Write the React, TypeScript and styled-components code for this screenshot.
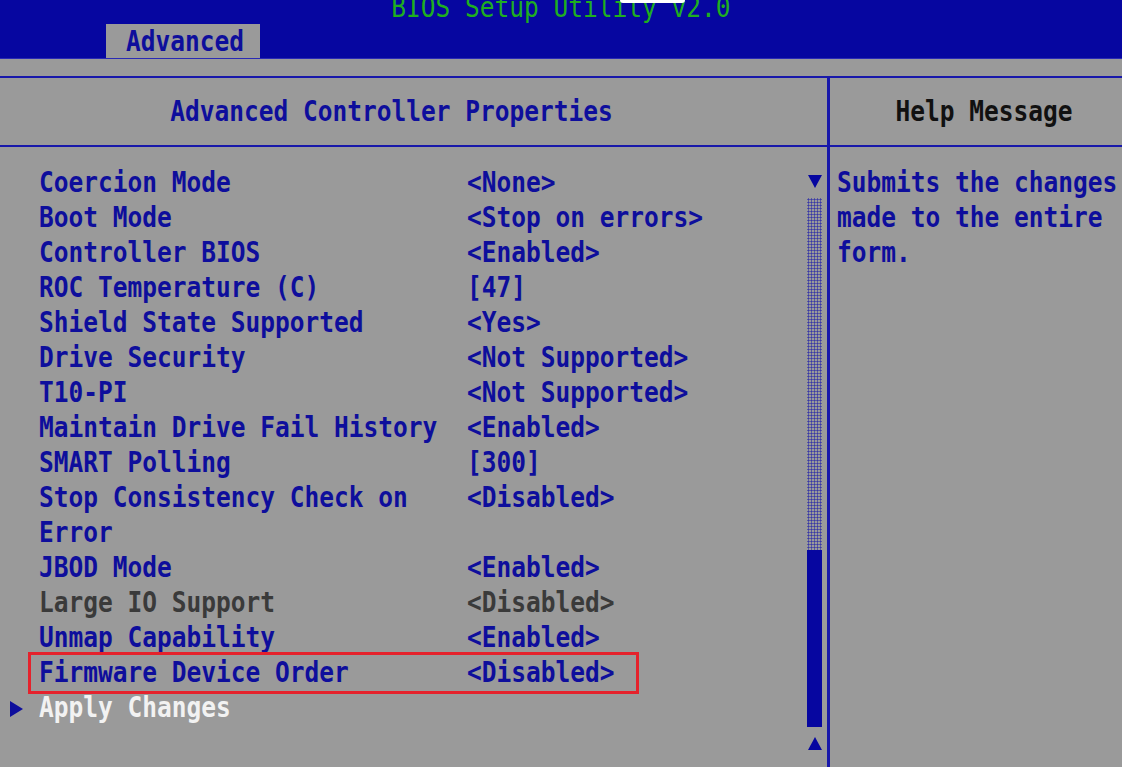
import React from "react";
import styled, { createGlobalStyle } from "styled-components";

const colors = {
  gray: "#9a9a9a",
  navy: "#0606a0",
  line: "#1818aa",
  text: "#0e0e9c",
  dim: "#3a3a3a",
  white: "#f2f2f2",
  green: "#1fae1f",
  red: "#e5222c",
};

const GlobalStyle = createGlobalStyle`
  html, body {
    margin: 0;
    padding: 0;
    background: ${colors.gray};
    overflow: hidden;
  }
  * {
    box-sizing: border-box;
  }
`;

type Tone = "normal" | "dim" | "active";

interface Setting {
  label: string;
  value?: string;
  tone?: Tone;
  highlighted?: boolean;
  pointer?: boolean;
}

const settings: Setting[] = [
  { label: "Coercion Mode", value: "<None>" },
  { label: "Boot Mode", value: "<Stop on errors>" },
  { label: "Controller BIOS", value: "<Enabled>" },
  { label: "ROC Temperature (C)", value: "[47]" },
  { label: "Shield State Supported", value: "<Yes>" },
  { label: "Drive Security", value: "<Not Supported>" },
  { label: "T10-PI", value: "<Not Supported>" },
  { label: "Maintain Drive Fail History", value: "<Enabled>" },
  { label: "SMART Polling", value: "[300]" },
  { label: "Stop Consistency Check on Error", value: "<Disabled>" },
  { label: "JBOD Mode", value: "<Enabled>" },
  { label: "Large IO Support", value: "<Disabled>", tone: "dim" },
  { label: "Unmap Capability", value: "<Enabled>" },
  { label: "Firmware Device Order", value: "<Disabled>", highlighted: true },
  { label: "Apply Changes", tone: "active", pointer: true },
];

// each word is its own stretched box so long labels still wrap line by line
const Words: React.FC<{ text: string }> = ({ text }) => (
  <>
    {text.split(" ").map((w, i) => (
      <React.Fragment key={i}>
        {i > 0 && " "}
        <Text>{w}</Text>
      </React.Fragment>
    ))}
  </>
);

const App: React.FC = () => {
  return (
    <>
      <GlobalStyle />
      <Screen>
        <TopBar>
          <Notch />
          <Title>BIOS Setup Utility v2.0</Title>
          <TabRow>
            <Tab>
              <Text>Advanced</Text>
            </Tab>
          </TabRow>
        </TopBar>
        <Frame>
          <MainPanel>
            <PanelHeader $padRight={44}>
              <Text>Advanced Controller Properties</Text>
            </PanelHeader>
            <MainBody>
              <List>
                {settings.map((s) => (
                  <Row key={s.label} $highlighted={s.highlighted}>
                    <Marker>{s.pointer && <Pointer />}</Marker>
                    <Cell $tone={s.tone || "normal"}>
                      <Words text={s.label} />
                    </Cell>
                    <Cell $tone={s.tone || "normal"}>
                      {s.value && <Words text={s.value} />}
                    </Cell>
                  </Row>
                ))}
              </List>
              <Scrollbar>
                <ArrowDown />
                <Track />
                <Thumb />
                <ArrowUp />
              </Scrollbar>
            </MainBody>
          </MainPanel>
          <HelpPanel>
            <PanelHeader $dark $padLeft={16}>
              <Text>Help Message</Text>
            </PanelHeader>
            <HelpBody>
              <Text>Submits the changes</Text>
              <Text>made to the entire</Text>
              <Text>form.</Text>
            </HelpBody>
          </HelpPanel>
        </Frame>
      </Screen>
    </>
  );
};

export default App;

const Screen = styled.div`
  width: 1122px;
  height: 767px;
  display: flex;
  flex-direction: column;
  background: ${colors.gray};
  font-family: "DejaVu Sans Mono", "Liberation Mono", monospace;
  font-weight: bold;
  font-size: 24.5px;
  color: ${colors.text};
  overflow: hidden;
`;

const Text = styled.span`
  display: inline-block;
  transform: scaleY(1.16);
  white-space: pre;
`;

const TopBar = styled.div`
  position: relative;
  height: 59px;
  background: ${colors.navy};
  border-bottom: 1px solid #2a2ab4;
  display: flex;
  flex-direction: column;
`;

const Notch = styled.div`
  position: absolute;
  top: 0;
  left: 620px;
  width: 65px;
  height: 3px;
  background: #ffffff;
  border-radius: 0 0 12px 12px;
  z-index: 1;
`;

const Title = styled.div`
  height: 24px;
  margin-top: -4px;
  line-height: 24px;
  text-align: center;
  color: ${colors.green};
  font-weight: normal;
  transform: scaleY(1.16);
`;

const TabRow = styled.div`
  display: flex;
  padding-left: 106px;
  margin-top: auto;
`;

const Tab = styled.div`
  width: 154px;
  height: 34px;
  padding-left: 20px;
  padding-top: 1px;
  background: ${colors.gray};
  line-height: 34px;
  color: ${colors.text};
`;

const Frame = styled.div`
  margin-top: 17px;
  flex: 1;
  display: flex;
  border-top: 2px solid ${colors.line};
`;

const MainPanel = styled.div`
  width: 830px;
  display: flex;
  flex-direction: column;
  border-right: 3px solid ${colors.line};
`;

const HelpPanel = styled.div`
  flex: 1;
  display: flex;
  flex-direction: column;
`;

const PanelHeader = styled.div<{
  $dark?: boolean;
  $padLeft?: number;
  $padRight?: number;
}>`
  height: 69px;
  display: flex;
  align-items: center;
  justify-content: center;
  padding-left: ${({ $padLeft }) => $padLeft || 0}px;
  padding-right: ${({ $padRight }) => $padRight || 0}px;
  border-bottom: 2px solid ${colors.line};
  color: ${({ $dark }) => ($dark ? "#111111" : colors.text)};
`;

const MainBody = styled.div`
  flex: 1;
  display: flex;
`;

const List = styled.div`
  flex: 1;
  padding-top: 18px;
  display: flex;
  flex-direction: column;
`;

const Row = styled.div<{ $highlighted?: boolean }>`
  position: relative;
  display: grid;
  grid-template-columns: 39px 428px 1fr;
  line-height: 35px;

  ${({ $highlighted }) =>
    $highlighted &&
    `
    &::after {
      content: "";
      position: absolute;
      left: 28px;
      width: 605px;
      top: -3px;
      bottom: -4px;
      border: 3px solid ${colors.red};
      pointer-events: none;
    }
  `}
`;

const Marker = styled.div`
  display: flex;
  align-items: center;
  padding-left: 10px;
  padding-top: 2px;
`;

const Pointer = styled.div`
  width: 0;
  height: 0;
  border-top: 8px solid transparent;
  border-bottom: 8px solid transparent;
  border-left: 13px solid ${colors.text};
`;

const toneColor = (tone: Tone) =>
  tone === "dim" ? colors.dim : tone === "active" ? colors.white : colors.text;

const Cell = styled.div<{ $tone: Tone }>`
  color: ${({ $tone }) => toneColor($tone)};
`;

const Scrollbar = styled.div`
  width: 15px;
  margin-right: 5px;
  padding-top: 28px;
  display: flex;
  flex-direction: column;
  align-items: center;
`;

const ArrowDown = styled.div`
  width: 0;
  height: 0;
  border-left: 7px solid transparent;
  border-right: 7px solid transparent;
  border-top: 13px solid ${colors.navy};
  margin-bottom: 10px;
`;

const ArrowUp = styled.div`
  width: 0;
  height: 0;
  border-left: 7px solid transparent;
  border-right: 7px solid transparent;
  border-bottom: 13px solid ${colors.navy};
  margin-top: 10px;
`;

const Track = styled.div`
  width: 15px;
  height: 352px;
  background-image: radial-gradient(
    circle,
    rgba(24, 24, 170, 0.75) 0.9px,
    transparent 1.2px
  );
  background-size: 3px 3px;
`;

const Thumb = styled.div`
  width: 15px;
  height: 177px;
  background: ${colors.navy};
`;

const HelpBody = styled.div`
  padding-top: 18px;
  padding-left: 7px;
  display: flex;
  flex-direction: column;
  align-items: flex-start;
  line-height: 35px;
`;
